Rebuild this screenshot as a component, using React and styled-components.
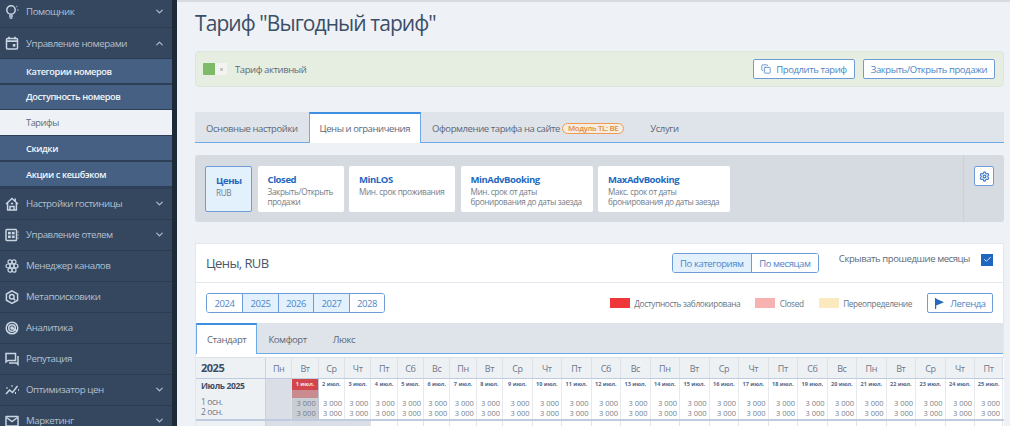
import React from 'react';
import styled, { createGlobalStyle } from 'styled-components';
import { ChevronDown, ChevronUp, Copy, Settings, Check } from 'lucide-react';

const GlobalStyle = createGlobalStyle`
    html, body {
        margin: 0;
        padding: 0;
        background: #eef2f6;
    }
    * {
        box-sizing: border-box;
        letter-spacing: -0.044em;
    }
`;

const PageContainer = styled.div`
    display: flex;
    width: 1010px;
    height: 426px;
    overflow: hidden;
    font-family: "Open Sans", "Noto Sans", sans-serif;
`;

const Sidebar = styled.nav`
    flex: 0 0 177px;
    height: 100%;
    overflow: hidden;
    background: #34475f;
    border-right: 5px solid #1d2a38;
`;

const MenuItem = styled.div`
    display: flex;
    align-items: center;
    height: ${({ $first }) => ($first ? '28px' : '31px')};
    padding: ${({ $first }) => ($first ? '0 7px 4px 0' : '0 7px 0 0')};
    border-bottom: 1px solid #2b3c52;
    color: #b3c0d0;
    font-size: 9.7px;
    font-weight: 500;
`;

const MenuIcon = styled.svg`
    flex: 0 0 14px;
    width: 14px;
    height: 14px;
    margin: 0 7px 0 5px;
    fill: none;
    stroke: #c9d5e3;
    stroke-width: 1.5;
`;

const MenuLabel = styled.span`
    flex: 1;
`;

const SubMenu = styled.div`
    display: flex;
    flex-direction: column;
    gap: 1.55px;
    padding-bottom: 2.5px;
    background: #2d4058;
`;

const SubItem = styled.div`
    display: flex;
    align-items: center;
    height: 24.2px;
    padding-left: 26px;
    background: ${({ $active }) => ($active ? '#eef2f6' : '#456082')};
    color: ${({ $active }) => ($active ? '#5b6a7d' : '#f2f5f9')};
    font-size: 9.2px;
    font-weight: ${({ $active }) => ($active ? 500 : 600)};
`;

const Main = styled.main`
    flex: 1;
    min-width: 0;
    padding: 0 6px 0 18px;
    border-top: 2px solid #d6dbe1;
    background: #eef2f6;
`;

const PageTitle = styled.h1`
    margin: 0;
    height: 49px;
    color: #3c4e66;
    font-size: 21px;
    font-weight: 400;
    line-height: 43px;
`;

const StatusBar = styled.div`
    display: flex;
    align-items: center;
    height: 36px;
    padding: 0 8px 0 7px;
    background: #e5eee1;
    border: 1px solid #dde6de;
    border-radius: 4px;
`;

const Switch = styled.div`
    display: flex;
    width: 24px;
    height: 12px;
    margin-right: 8px;
    border-radius: 1px;
    overflow: hidden;
`;

const SwitchOn = styled.div`
    flex: 1;
    background: #7dbb69;
`;

const SwitchOff = styled.div`
    flex: 1;
    display: flex;
    align-items: center;
    justify-content: center;
    background: #f3f4f2;
    &::after {
        content: '';
        width: 3px;
        height: 3px;
        background: #c5c9c5;
    }
`;

const StatusText = styled.span`
    flex: 1;
    color: #5d6a78;
    font-size: 9.5px;
`;

const OutlineButton = styled.button`
    display: inline-flex;
    align-items: center;
    justify-content: center;
    gap: 5px;
    width: ${({ $width }) => $width}px;
    height: 20px;
    margin-left: ${({ $gap }) => $gap || 0}px;
    padding: 0;
    background: #fff;
    border: 1px solid #6f9cd6;
    border-radius: 2px;
    color: #4d86c9;
    font-family: inherit;
    font-size: 9.5px;
`;

const TabStrip = styled.div`
    display: flex;
    height: ${({ $height }) => $height}px;
    margin-top: ${({ $top }) => $top || 0}px;
    background: #dfe3ea;
    border-bottom: 1px solid #6eaae8;
`;

const Tab = styled.div`
    display: flex;
    align-items: center;
    height: calc(100% + 1px);
    padding: 0 ${({ $pad }) => $pad}px;
    background: ${({ $active }) => ($active ? '#fff' : 'transparent')};
    border: 1px solid ${({ $active }) => ($active ? '#6eaae8' : 'transparent')};
    border-top: 2px solid ${({ $active }) => ($active ? '#3f8fe0' : 'transparent')};
    border-bottom: 0;
    color: #5c6878;
    font-size: 9.5px;
    white-space: nowrap;
`;

const ModuleBadge = styled.span`
    margin-left: 2px;
    padding: 0 5px;
    height: 11px;
    border: 1px solid #ee9a55;
    border-radius: 6px;
    background: #f6ecdf;
    color: #e48a3e;
    font-size: 7.8px;
    line-height: 9px;
    font-weight: 600;
`;

const RulesPanel = styled.div`
    display: flex;
    height: 67px;
    margin-top: 12px;
    background: #d6dbe2;
    border-radius: 3px;
`;

const RulesList = styled.div`
    flex: 1;
    display: flex;
    gap: 5.5px;
    padding: 11px 0 0 10px;
`;

const RuleCard = styled.div`
    width: ${({ $width }) => $width}px;
    height: 46px;
    padding: 6px 0 0 10px;
    background: ${({ $active }) => ($active ? '#e3f1fd' : '#fff')};
    border: ${({ $active }) => ($active ? '1px solid #6f9cd6' : '0')};
    border-radius: 2px;
`;

const RuleTitle = styled.div`
    color: #2568bd;
    font-size: 9.5px;
    font-weight: 700;
    line-height: 15px;
`;

const RuleText = styled.div`
    color: #727d8c;
    font-size: 8.2px;
    line-height: 10px;
    white-space: pre;
`;

const RulesSide = styled.div`
    flex: 0 0 41px;
    padding: 11px 0 0 10px;
    border-left: 1px solid #cbd1da;
`;

const IconButton = styled.button`
    display: flex;
    align-items: center;
    justify-content: center;
    width: 20px;
    height: 20px;
    padding: 0;
    background: #fff;
    border: 1px solid #6f9cd6;
    border-radius: 2px;
    color: #3e7cc9;
`;

const PricesCard = styled.section`
    margin-top: 21px;
    background: #fff;
    border: 1px solid #e3e7ed;
    border-bottom: 0;
`;

const CardHeader = styled.div`
    display: flex;
    align-items: center;
    height: 39px;
    padding: 0 10px;
    border-bottom: 1px solid #e3e7ed;
`;

const CardTitle = styled.h2`
    flex: 1;
    margin: 0;
    color: #4b5768;
    font-size: 13px;
    font-weight: 400;
`;

const ButtonGroup = styled.div`
    display: flex;
    height: 20px;
    border: 1px solid #6f9cd6;
    border-radius: 3px;
    overflow: hidden;
`;

const GroupItem = styled.div`
    display: flex;
    align-items: center;
    justify-content: center;
    width: ${({ $width }) => $width}px;
    background: ${({ $active }) => ($active ? '#e3f1fd' : '#fff')};
    color: #4d86c9;
    font-size: 9.5px;
    & + & {
        border-left: 1px solid #6f9cd6;
    }
`;

const HidePast = styled.span`
    margin: 0 0 9px 20px;
    color: #5d6a78;
    font-size: 9.5px;
`;

const CheckBox = styled.span`
    display: flex;
    align-items: center;
    justify-content: center;
    width: 12px;
    height: 12px;
    margin: 0 0 7px 11px;
    background: #1f66c0;
    color: #dfeaf7;
`;

const ToolsRow = styled.div`
    display: flex;
    align-items: center;
    height: 40px;
    padding: 0 10px;
`;

const LegendSwatch = styled.span`
    width: 20px;
    height: 10px;
    margin: 0 4.5px 0 ${({ $gap }) => $gap}px;
    background: ${({ $color }) => $color};
`;

const LegendText = styled.span`
    color: #69747f;
    font-size: 8.3px;
`;

const Spacer = styled.div`
    flex: 1;
`;

const CalendarTable = styled.div`
    width: 808px;
    margin-top: 3px;
    border-top: 1px solid #dde1e7;
    background: #fff;
`;

const COLUMNS = '70px repeat(9, 26.35px) repeat(16, 29.5px) 28px';

const TableRow = styled.div`
    display: grid;
    grid-template-columns: ${COLUMNS};
    height: ${({ $height }) => $height}px;
    border-bottom: ${({ $line }) => $line}px solid #bfcce0;
`;

const CornerCell = styled.div`
    display: flex;
    flex-direction: column;
    padding: ${({ $head }) => ($head ? '0' : '1px')} 0 0 5px;
    background: #eef1f4;
    border-right: 1px solid #c8d3e3;
    color: #3c4e66;
    font-size: 11px;
    font-weight: 700;
    line-height: ${({ $head }) => ($head ? '19px' : '12px')};
`;

const MonthName = styled.div`
    height: 17px;
    font-size: 8.5px;
    font-weight: 700;
`;

const RowName = styled.div`
    height: 10px;
    color: #6d7889;
    font-size: 8.5px;
    font-weight: 400;
    line-height: 10px;
`;

const WeekDay = styled.div`
    display: flex;
    align-items: center;
    justify-content: center;
    background: #eef1f4;
    border-right: 1px solid #dde1e7;
    color: #6d7889;
    font-size: 9px;
`;

const DayCell = styled.div`
    background: ${({ $past }) => ($past ? '#c9cdd4' : '#fff')};
    border-right: 1px solid ${({ $past }) => ($past ? '#bfc6d2' : '#e6e9ee')};
`;

const EmptyDay = styled.div`
    background: ${({ $past }) => ($past ? '#d9dee7' : '#fff')};
    border-right: 1px solid #e0e4ea;
`;

const DayLabel = styled.div`
    height: 11px;
    background: ${({ $blocked }) => ($blocked ? '#d1474b' : 'transparent')};
    color: ${({ $blocked }) => ($blocked ? '#fbe8e8' : '#55678a')};
    font-size: 5.5px;
    font-weight: 700;
    letter-spacing: 0;
    line-height: 11px;
    text-align: center;
    white-space: nowrap;
`;

const DayGap = styled.div`
    height: 8px;
    background: ${({ $blocked }) => ($blocked ? '#c98a90' : 'transparent')};
`;

const Price = styled.div`
    height: 10px;
    padding-right: 2px;
    color: #757f8c;
    font-size: 7.5px;
    letter-spacing: 0;
    line-height: 10px;
    text-align: right;
    white-space: nowrap;
`;

const Lamp = () => (
    <MenuIcon viewBox="0 0 14 14">
        <circle cx="6" cy="5" r="4.2" />
        <path d="M4 11h4M4.6 13h2.8" />
        <path d="M11.5 1.5h.8M12.5 5h.8" strokeWidth="1.6" />
    </MenuIcon>
);

const CalendarIcon = () => (
    <MenuIcon viewBox="0 0 14 14">
        <rect x="1.5" y="2.5" width="11" height="10.5" rx="1" />
        <path d="M1.5 5.2h11M4 .8v2.5M10 .8v2.5" strokeWidth="1.7" />
        <rect x="7.8" y="8" width="2.6" height="2.6" fill="#c9d5e3" stroke="none" />
    </MenuIcon>
);

const HouseIcon = () => (
    <MenuIcon viewBox="0 0 14 14">
        <path d="M1 7 7 1.5 13 7M2.6 6v7h8.8V6" />
        <path d="M5 13V9.5h4V13M5.8 6.5h2.4" />
        <path d="M10.2 1.5v2.6" />
    </MenuIcon>
);

const BoardIcon = () => (
    <MenuIcon viewBox="0 0 14 14">
        <rect x="1" y="1.5" width="10.5" height="11" rx=".8" />
        <rect x="3" y="3.8" width="2.8" height="2.6" fill="#c9d5e3" stroke="none" />
        <rect x="6.8" y="3.8" width="2.8" height="2.6" fill="#c9d5e3" stroke="none" />
        <rect x="3" y="7.5" width="2.8" height="2.6" fill="#c9d5e3" stroke="none" />
        <rect x="6.8" y="7.5" width="2.8" height="2.6" fill="#c9d5e3" stroke="none" />
        <path d="M12.5 4h1.2M12.5 7h1.2M12.5 10h1.2" strokeWidth="1" />
    </MenuIcon>
);

const CellsIcon = () => (
    <MenuIcon viewBox="0 0 14 14" style={{ strokeWidth: 1.2 }}>
        <circle cx="5" cy="2.8" r="2" />
        <circle cx="9" cy="2.8" r="2" />
        <circle cx="3" cy="7" r="2" />
        <circle cx="7" cy="7" r="2" />
        <circle cx="11" cy="7" r="2" />
        <circle cx="5" cy="11.2" r="2" />
        <circle cx="9" cy="11.2" r="2" />
    </MenuIcon>
);

const HexSearchIcon = () => (
    <MenuIcon viewBox="0 0 14 14">
        <path d="M7 .8 12.6 4v6.2L7 13.4 1.4 10.2V4Z" />
        <circle cx="6.8" cy="6.8" r="2.3" />
        <path d="m8.6 8.6 1.6 1.6" />
    </MenuIcon>
);

const RadarIcon = () => (
    <MenuIcon viewBox="0 0 14 14">
        <circle cx="7" cy="7" r="5.8" />
        <circle cx="7" cy="7" r="3.3" />
        <circle cx="7" cy="7" r="1.1" fill="#c9d5e3" />
        <path d="m7 7 5.5 3" />
    </MenuIcon>
);

const ChatIcon = () => (
    <MenuIcon viewBox="0 0 14 14">
        <path d="M1 1.5h9.5v7H3L1 10Z" />
        <path d="M4 11h7.5l1.5 1.5V4" />
    </MenuIcon>
);

const ZigzagIcon = () => (
    <MenuIcon viewBox="0 0 14 14">
        <path d="m1 11 3.5-4 3 2.5L12.5 3" />
        <path d="M1.5 5h1M6.5 3h1M10 10h1M13 7h.8" strokeWidth="1.8" />
    </MenuIcon>
);

const MailIcon = () => (
    <MenuIcon viewBox="0 0 14 14">
        <rect x="1" y="2.5" width="12" height="9.5" rx=".5" />
        <path d="m1.5 3.5 5.5 4 5.5-4" />
    </MenuIcon>
);

const FlagIcon = () => (
    <svg width="11" height="11" viewBox="0 0 11 11">
        <path d="M1 0h1.2v11H1Z M2.2 .8 10 4.2 2.2 7.4Z" fill="#2568bd" />
    </svg>
);

const TAIL_ITEMS = [
    { icon: <BoardIcon />, label: 'Управление отелем', more: true },
    { icon: <CellsIcon />, label: 'Менеджер каналов' },
    { icon: <HexSearchIcon />, label: 'Метапоисковики' },
    { icon: <RadarIcon />, label: 'Аналитика' },
    { icon: <ChatIcon />, label: 'Репутация' },
    { icon: <ZigzagIcon />, label: 'Оптимизатор цен', more: true },
    { icon: <MailIcon />, label: 'Маркетинг', more: true },
];

const SUB_ITEMS = ['Категории номеров', 'Доступность номеров', 'Тарифы', 'Скидки', 'Акции с кешбэком'];

const RULES = [
    { title: 'Цены', text: 'RUB', width: 47, active: true },
    { title: 'Closed', text: 'Закрыть/Открыть\nпродажи', width: 86 },
    { title: 'MinLOS', text: 'Мин. срок проживания', width: 106 },
    { title: 'MinAdvBooking', text: 'Мин. срок от даты\nбронирования до даты заезда', width: 132 },
    { title: 'MaxAdvBooking', text: 'Макс. срок от даты\nбронирования до даты заезда', width: 132 },
];

const YEARS = [
    { year: 2024, width: 35 },
    { year: 2025, width: 36, active: true },
    { year: 2026, width: 35, active: true },
    { year: 2027, width: 36, active: true },
    { year: 2028, width: 35 },
];

const WEEK = ['Пн', 'Вт', 'Ср', 'Чт', 'Пт', 'Сб', 'Вс'];
const DAYS = Array.from({ length: 25 }, (_, i) => i + 1);
const ALL_COLUMNS = Array.from({ length: 26 }, (_, i) => i);

export default function App() {
    return <PageContainer>
        <GlobalStyle />
        <Sidebar>
            <MenuItem $first>
                <Lamp />
                <MenuLabel>Помощник</MenuLabel>
                <ChevronDown size={11} strokeWidth={2.5} />
            </MenuItem>
            <MenuItem>
                <CalendarIcon />
                <MenuLabel>Управление номерами</MenuLabel>
                <ChevronUp size={11} strokeWidth={2.5} />
            </MenuItem>
            <SubMenu>
                {SUB_ITEMS.map((item) => (
                    <SubItem key={item} $active={item === 'Тарифы'}>{item}</SubItem>
                ))}
            </SubMenu>
            <MenuItem>
                <HouseIcon />
                <MenuLabel>Настройки гостиницы</MenuLabel>
                <ChevronDown size={11} strokeWidth={2.5} />
            </MenuItem>
            {TAIL_ITEMS.map((item) => (
                <MenuItem key={item.label}>
                    {item.icon}
                    <MenuLabel>{item.label}</MenuLabel>
                    {item.more && <ChevronDown size={11} strokeWidth={2.5} />}
                </MenuItem>
            ))}
        </Sidebar>
        <Main>
            <PageTitle>Тариф "Выгодный тариф"</PageTitle>
            <StatusBar>
                <Switch>
                    <SwitchOn />
                    <SwitchOff />
                </Switch>
                <StatusText>Тариф активный</StatusText>
                <OutlineButton $width={102}>
                    <Copy size={10} strokeWidth={2} />
                    Продлить тариф
                </OutlineButton>
                <OutlineButton $width={132} $gap={8}>Закрыть/Открыть продажи</OutlineButton>
            </StatusBar>
            <TabStrip $height={31} $top={25}>
                <Tab $pad={10}>Основные настройки</Tab>
                <Tab $pad={10} $active>Цены и ограничения</Tab>
                <Tab $pad={10}>
                    Оформление тарифа на сайте
                    <ModuleBadge>Модуль TL: BE</ModuleBadge>
                </Tab>
                <Tab $pad={14}>Услуги</Tab>
            </TabStrip>
            <RulesPanel>
                <RulesList>
                    {RULES.map((rule) => (
                        <RuleCard key={rule.title} $width={rule.width} $active={rule.active}>
                            <RuleTitle>{rule.title}</RuleTitle>
                            <RuleText>{rule.text}</RuleText>
                        </RuleCard>
                    ))}
                </RulesList>
                <RulesSide>
                    <IconButton>
                        <Settings size={11} strokeWidth={2.6} />
                    </IconButton>
                </RulesSide>
            </RulesPanel>
            <PricesCard>
                <CardHeader>
                    <CardTitle>Цены, RUB</CardTitle>
                    <ButtonGroup>
                        <GroupItem $width={78} $active>По категориям</GroupItem>
                        <GroupItem $width={67}>По месяцам</GroupItem>
                    </ButtonGroup>
                    <HidePast>Скрывать прошедшие месяцы</HidePast>
                    <CheckBox>
                        <Check size={9} strokeWidth={2.5} />
                    </CheckBox>
                </CardHeader>
                <ToolsRow>
                    <ButtonGroup>
                        {YEARS.map((item) => (
                            <GroupItem key={item.year} $width={item.width} $active={item.active}>{item.year}</GroupItem>
                        ))}
                    </ButtonGroup>
                    <Spacer />
                    <LegendSwatch $gap={0} $color="#ef3639" />
                    <LegendText>Доступность заблокирована</LegendText>
                    <LegendSwatch $gap={15} $color="#f7b1b1" />
                    <LegendText>Closed</LegendText>
                    <LegendSwatch $gap={15} $color="#fbe9c0" />
                    <LegendText>Переопределение</LegendText>
                    <OutlineButton $width={66} $gap={15}>
                        <FlagIcon />
                        Легенда
                    </OutlineButton>
                </ToolsRow>
                <TabStrip $height={31}>
                    <Tab $pad={10} $active>Стандарт</Tab>
                    <Tab $pad={10}>Комфорт</Tab>
                    <Tab $pad={14}>Люкс</Tab>
                </TabStrip>
                <CalendarTable>
                    <TableRow $height={21} $line={1}>
                        <CornerCell $head>2025</CornerCell>
                        {ALL_COLUMNS.map((i) => (
                            <WeekDay key={i}>{WEEK[i % 7]}</WeekDay>
                        ))}
                    </TableRow>
                    <TableRow $height={42} $line={2}>
                        <CornerCell>
                            <MonthName>Июль 2025</MonthName>
                            <RowName>1 осн.</RowName>
                            <RowName>2 осн.</RowName>
                        </CornerCell>
                        <EmptyDay $past />
                        {DAYS.map((day) => (
                            <DayCell key={day} $past={day === 1}>
                                <DayLabel $blocked={day === 1}>{day} июл.</DayLabel>
                                <DayGap $blocked={day === 1} />
                                <Price>3 000</Price>
                                <Price>3 000</Price>
                            </DayCell>
                        ))}
                    </TableRow>
                    <TableRow $height={10} $line={0}>
                        <CornerCell />
                        {ALL_COLUMNS.map((i) => (
                            <EmptyDay key={i} $past={i < 4} />
                        ))}
                    </TableRow>
                </CalendarTable>
            </PricesCard>
        </Main>
    </PageContainer>
}
